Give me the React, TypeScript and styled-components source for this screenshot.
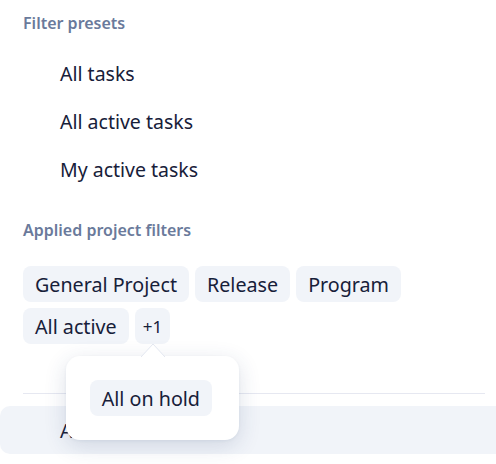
import styled, { createGlobalStyle } from "styled-components";

const GlobalStyle = createGlobalStyle`
  html, body {
    margin: 0;
    padding: 0;
    background: #ffffff;
    font-family: "Noto Sans", "Open Sans", sans-serif;
    overflow: hidden;
  }
`;

const Panel = styled.div`
  width: 496px;
  height: 464px;
  box-sizing: border-box;
  padding: 13px 11px 0 23px;
  position: relative;
  overflow: hidden;
`;

const SectionTitle = styled.div<{ $top?: number }>`
  margin-top: ${(p) => p.$top ?? 0}px;
  font-size: 16px;
  line-height: 20px;
  font-weight: 600;
  color: #6a7a9b;
`;

const PresetList = styled.div`
  margin-top: 16px;
  display: flex;
  flex-direction: column;
`;

const Preset = styled.div`
  height: 48px;
  display: flex;
  align-items: center;
  padding-left: 37px;
  font-size: 19.5px;
  color: #172039;
`;

const ChipWrap = styled.div`
  margin-top: 26px;
  display: flex;
  flex-wrap: wrap;
  gap: 6px;
  width: 400px;
`;

const Chip = styled.div<{ $small?: boolean }>`
  position: relative;
  height: 36px;
  box-sizing: border-box;
  padding: 0 ${(p) => (p.$small ? 8 : 12)}px;
  display: inline-flex;
  align-items: center;
  background: #f1f4f9;
  border-radius: 8px;
  font-size: ${(p) => (p.$small ? 17 : 19.7)}px;
  color: #172039;
  white-space: nowrap;
`;

const Divider = styled.div`
  margin-top: 49px;
  height: 1px;
  background: #e6e8f1;
`;

const ActiveRow = styled.div`
  margin: 12px -11px 0 -23px;
  height: 48px;
  display: flex;
  align-items: center;
  padding-left: 60px;
  background: #f1f4f9;
  border-radius: 10px 0 0 10px;
  font-size: 19.5px;
  color: #172039;
`;

const Popover = styled.div`
  position: absolute;
  left: -69px;
  top: 48px;
  width: 173px;
  height: 84px;
  box-sizing: border-box;
  padding: 24px;
  background: #ffffff;
  border-radius: 14px;
  box-shadow: 0 6px 22px rgba(40, 60, 110, 0.16), 0 1px 3px rgba(40, 60, 110, 0.06);
  z-index: 5;
`;

const Arrow = styled.svg`
  position: absolute;
  left: 75px;
  top: -13px;
`;

export default function App() {
  return (
    <>
      <GlobalStyle />
      <Panel>
        <SectionTitle>Filter presets</SectionTitle>
        <PresetList>
          <Preset>All tasks</Preset>
          <Preset>All active tasks</Preset>
          <Preset>My active tasks</Preset>
        </PresetList>
        <SectionTitle $top={27}>Applied project filters</SectionTitle>
        <ChipWrap>
          <Chip>General Project</Chip>
          <Chip>Release</Chip>
          <Chip>Program</Chip>
          <Chip>All active</Chip>
          <Chip $small>
            +1
            <Popover>
              <Arrow width="24" height="14" viewBox="0 0 24 14">
                <path d="M0 14 L12 1 L24 14 Z" fill="#ffffff" />
                <path d="M0 14 L12 1 L24 14" fill="none" stroke="#e3e7f0" strokeWidth="1" />
              </Arrow>
              <Chip>All on hold</Chip>
            </Popover>
          </Chip>
        </ChipWrap>
        <Divider />
        <ActiveRow>All on hold</ActiveRow>
      </Panel>
    </>
  );
}
